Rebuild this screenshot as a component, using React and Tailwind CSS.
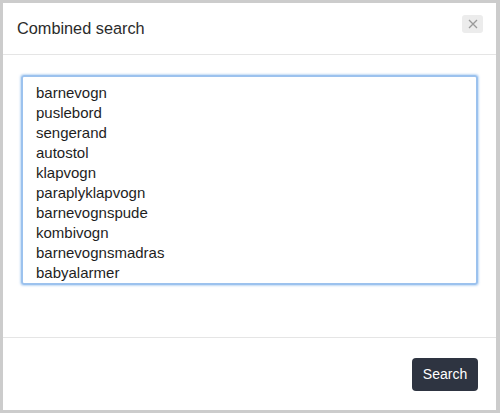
const terms = [
  'barnevogn',
  'puslebord',
  'sengerand',
  'autostol',
  'klapvogn',
  'paraplyklapvogn',
  'barnevognspude',
  'kombivogn',
  'barnevognsmadras',
  'babyalarmer',
]

export default function App() {
  return (
    <div
      className="h-[413px] w-[500px] bg-[#cccccc] pb-[3px] pl-[3px] pr-[4px] pt-[3px]"
      style={{ fontFamily: '"Liberation Sans", Arial, sans-serif' }}
    >
      <div className="flex h-full flex-col bg-white">
        {/* Header */}
        <div className="flex h-[52px] shrink-0 items-start justify-between border-b border-[#e5e5e5] pl-[14px] pr-[13px]">
          <h1 className="mt-[15px] text-[16.3px] leading-[20px] text-[#2b2b2b]">Combined search</h1>
          <button className="mt-[12px] flex h-[18px] w-[21px] items-center justify-center rounded-[3px] bg-[#ececec] text-[#9a9a9a]">
            <svg width="10" height="10" viewBox="0 0 10 10" fill="none" stroke="currentColor" strokeWidth="1.3">
              <path d="M1 1l8 8M9 1l-8 8" />
            </svg>
          </button>
        </div>

        {/* Body */}
        <div className="flex-1 px-[18px] pt-[20px]">
          <div className="h-[210px] rounded-[3px] border-2 border-[#9cc2ee] pl-[13px] pt-[6px] text-[15px] leading-[20px] text-[#1e1e1e] shadow-[0_0_2px_1px_rgba(140,185,235,0.55)]">
            {terms.map((t) => (
              <div key={t}>{t}</div>
            ))}
          </div>
        </div>

        {/* Footer */}
        <div className="flex h-[73px] shrink-0 items-start justify-end border-t border-[#e5e5e5] pr-[18px] pt-[20px]">
          <button className="h-[33px] w-[66px] rounded-[4px] bg-[#2e3441] text-[14px] text-white">
            Search
          </button>
        </div>
      </div>
    </div>
  )
}
